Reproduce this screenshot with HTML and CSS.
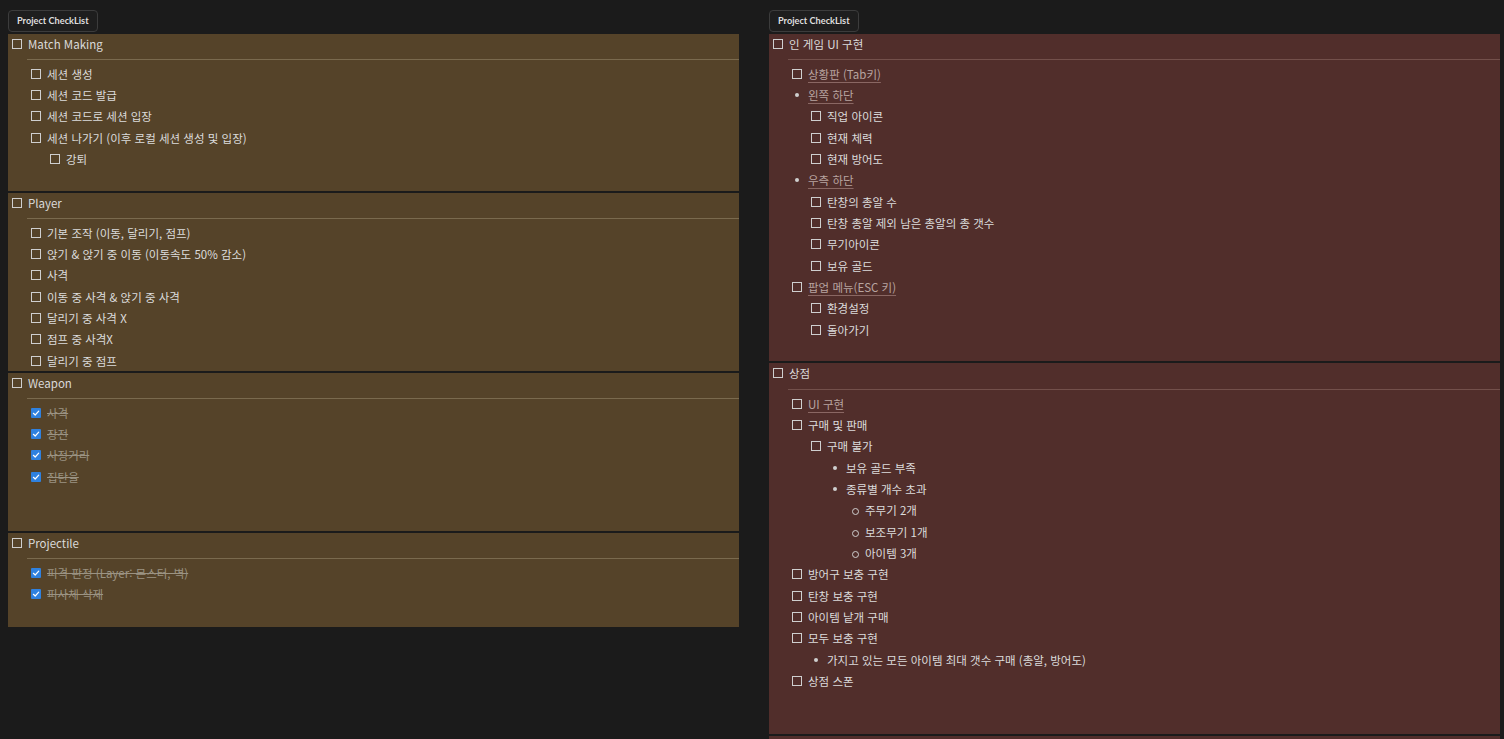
FILE: index.html
```html
<!DOCTYPE html>
<html lang="ko">
<head>
<meta charset="utf-8">
<title>Project CheckList</title>
<link rel="stylesheet" href="styles.css">
</head>
<body>
<div class="board">
  <div class="column">
    <div class="tab">Project CheckList</div>
    <div class="stack">
      <section class="node node--brown node--mm">
        <div class="node-title"><span class="box"></span><span>Match Making</span></div>
        <div class="rule"></div>
        <ul class="list">
          <li><div class="row"><span class="box"></span><span>세션 생성</span></div></li>
          <li><div class="row"><span class="box"></span><span>세션 코드 발급</span></div></li>
          <li><div class="row"><span class="box"></span><span>세션 코드로 세션 입장</span></div></li>
          <li><div class="row"><span class="box"></span><span>세션 나가기 (이후 로컬 세션 생성 및 입장)</span></div>
            <ul class="list">
              <li><div class="row"><span class="box"></span><span>강퇴</span></div></li>
            </ul>
          </li>
        </ul>
      </section>
      <section class="node node--brown node--player">
        <div class="node-title"><span class="box"></span><span>Player</span></div>
        <div class="rule"></div>
        <ul class="list">
          <li><div class="row"><span class="box"></span><span>기본 조작 (이동, 달리기, 점프)</span></div></li>
          <li><div class="row"><span class="box"></span><span>앉기 &amp; 앉기 중 이동 (이동속도 50% 감소)</span></div></li>
          <li><div class="row"><span class="box"></span><span>사격</span></div></li>
          <li><div class="row"><span class="box"></span><span>이동 중 사격 &amp; 앉기 중 사격</span></div></li>
          <li><div class="row"><span class="box"></span><span>달리기 중 사격 X</span></div></li>
          <li><div class="row"><span class="box"></span><span>점프 중 사격X</span></div></li>
          <li><div class="row"><span class="box"></span><span>달리기 중 점프</span></div></li>
        </ul>
      </section>
      <section class="node node--brown node--weapon">
        <div class="node-title"><span class="box"></span><span>Weapon</span></div>
        <div class="rule"></div>
        <ul class="list">
          <li><div class="row row--done"><svg class="check" viewBox="0 0 10 10"><rect width="10" height="10" rx="1"/><path d="M2.4 5.3 L4.2 7 L7.7 3.2"/></svg><span>사격</span></div></li>
          <li><div class="row row--done"><svg class="check" viewBox="0 0 10 10"><rect width="10" height="10" rx="1"/><path d="M2.4 5.3 L4.2 7 L7.7 3.2"/></svg><span>장전</span></div></li>
          <li><div class="row row--done"><svg class="check" viewBox="0 0 10 10"><rect width="10" height="10" rx="1"/><path d="M2.4 5.3 L4.2 7 L7.7 3.2"/></svg><span>사정거리</span></div></li>
          <li><div class="row row--done"><svg class="check" viewBox="0 0 10 10"><rect width="10" height="10" rx="1"/><path d="M2.4 5.3 L4.2 7 L7.7 3.2"/></svg><span>집탄율</span></div></li>
        </ul>
      </section>
      <section class="node node--brown node--proj">
        <div class="node-title"><span class="box"></span><span>Projectile</span></div>
        <div class="rule"></div>
        <ul class="list">
          <li><div class="row row--done"><svg class="check" viewBox="0 0 10 10"><rect width="10" height="10" rx="1"/><path d="M2.4 5.3 L4.2 7 L7.7 3.2"/></svg><span>피격 판정 (Layer: 몬스터, 벽)</span></div></li>
          <li><div class="row row--done"><svg class="check" viewBox="0 0 10 10"><rect width="10" height="10" rx="1"/><path d="M2.4 5.3 L4.2 7 L7.7 3.2"/></svg><span>피사체 삭제</span></div></li>
        </ul>
      </section>
    </div>
  </div>

  <div class="column">
    <div class="tab">Project CheckList</div>
    <div class="stack">
      <section class="node node--red node--ingame">
        <div class="node-title"><span class="box"></span><span>인 게임 UI 구현</span></div>
        <div class="rule"></div>
        <ul class="list">
          <li><div class="row"><span class="box"></span><span class="link">상황판 (Tab키)</span></div></li>
          <li><div class="row"><span class="dot"></span><span class="link">왼쪽 하단</span></div>
            <ul class="list">
              <li><div class="row"><span class="box"></span><span>직업 아이콘</span></div></li>
              <li><div class="row"><span class="box"></span><span>현재 체력</span></div></li>
              <li><div class="row"><span class="box"></span><span>현재 방어도</span></div></li>
            </ul>
          </li>
          <li><div class="row"><span class="dot"></span><span class="link">우측 하단</span></div>
            <ul class="list">
              <li><div class="row"><span class="box"></span><span>탄창의 총알 수</span></div></li>
              <li><div class="row"><span class="box"></span><span>탄창 총알 제외 남은 총알의 총 갯수</span></div></li>
              <li><div class="row"><span class="box"></span><span>무기아이콘</span></div></li>
              <li><div class="row"><span class="box"></span><span>보유 골드</span></div></li>
            </ul>
          </li>
          <li><div class="row"><span class="box"></span><span class="link">팝업 메뉴(ESC 키)</span></div>
            <ul class="list">
              <li><div class="row"><span class="box"></span><span>환경설정</span></div></li>
              <li><div class="row"><span class="box"></span><span>돌아가기</span></div></li>
            </ul>
          </li>
        </ul>
      </section>
      <section class="node node--red node--shop">
        <div class="node-title"><span class="box"></span><span>상점</span></div>
        <div class="rule rule--shop"></div>
        <ul class="list">
          <li><div class="row"><span class="box"></span><span class="link">UI 구현</span></div></li>
          <li><div class="row"><span class="box"></span><span>구매 및 판매</span></div>
            <ul class="list">
              <li><div class="row"><span class="box"></span><span>구매 불가</span></div>
                <ul class="list">
                  <li><div class="row"><span class="dot"></span><span>보유 골드 부족</span></div></li>
                  <li><div class="row"><span class="dot"></span><span>종류별 개수 초과</span></div>
                    <ul class="list">
                      <li><div class="row"><span class="dot dot--hollow"></span><span>주무기 2개</span></div></li>
                      <li><div class="row"><span class="dot dot--hollow"></span><span>보조무기 1개</span></div></li>
                      <li><div class="row"><span class="dot dot--hollow"></span><span>아이템 3개</span></div></li>
                    </ul>
                  </li>
                </ul>
              </li>
            </ul>
          </li>
          <li><div class="row"><span class="box"></span><span>방어구 보충 구현</span></div></li>
          <li><div class="row"><span class="box"></span><span>탄창 보충 구현</span></div></li>
          <li><div class="row"><span class="box"></span><span>아이템 낱개 구매</span></div></li>
          <li><div class="row"><span class="box"></span><span>모두 보충 구현</span></div>
            <ul class="list">
              <li><div class="row"><span class="dot"></span><span>가지고 있는 모든 아이템 최대 갯수 구매 (총알, 방어도)</span></div></li>
            </ul>
          </li>
          <li><div class="row"><span class="box"></span><span>상점 스폰</span></div></li>
        </ul>
      </section>
      <section class="node node--red node--next"></section>
    </div>
  </div>
</div>
</body>
</html>
```

FILE: styles.css
```css
* { box-sizing: border-box; }

html, body {
  margin: 0;
  padding: 0;
  height: 100%;
  overflow: hidden;
  background: #1b1b1b;
}

body {
  font-family: "Noto Sans CJK KR", "Noto Sans", sans-serif;
  font-size: 11.5px;
  color: #dcdcdc;
}

.board {
  display: flex;
  gap: 30px;
  padding: 10px 0 0 8px;
}

.column {
  width: 731px;
  display: flex;
  flex-direction: column;
  align-items: flex-start;
}

.tab {
  height: 22px;
  padding: 0 8px;
  border: 1px solid #3c3c3c;
  border-radius: 4px;
  background: #1e1e1e;
  font-family: "Lato", "Noto Sans", sans-serif;
  font-size: 9.2px;
  font-weight: 700;
  line-height: 20px;
  color: #dedede;
  margin-bottom: 2px;
}

.stack {
  width: 100%;
  display: flex;
  flex-direction: column;
  gap: 2px;
}

.node {
  width: 100%;
  overflow: hidden;
}

.node--brown { background: #554329; }
.node--red { background: #512e2b; }

.node--mm { height: 157px; }
.node--player { height: 178px; }
.node--weapon { height: 158px; }
.node--proj { height: 94px; }
.node--ingame { height: 327px; }
.node--shop { height: 371px; }
.node--next { height: 3px; }

.node-title {
  display: flex;
  align-items: center;
  gap: 6px;
  height: 19px;
  padding-left: 4px;
  color: #dadada;
}

.rule {
  height: 1px;
  margin: 6px 0 0 19px;
}
.node--brown .rule { background: #7a6a4e; }
.node--red .rule { background: #73504b; }
.rule--shop { margin-top: 7px; }

.list {
  list-style: none;
  margin: 0;
  padding: 0 0 0 19px;
}

.node > .list {
  padding-left: 23px;
  margin-top: 3px;
}

.row {
  display: flex;
  align-items: center;
  gap: 6px;
  height: 21.33px;
  white-space: nowrap;
}

.box {
  flex: none;
  width: 10px;
  height: 10px;
  border: 1px solid #cfcfcf;
}

.check {
  flex: none;
  width: 10px;
  height: 10px;
}
.check rect { fill: #2f81df; }
.check path {
  fill: none;
  stroke: #ffffff;
  stroke-width: 1.2;
  stroke-linecap: round;
  stroke-linejoin: round;
}

.row--done span {
  color: #9b9383;
  text-decoration: line-through;
  text-decoration-color: #9b9383;
}

.dot {
  flex: none;
  width: 10px;
  height: 10px;
  position: relative;
}
.dot::after {
  content: "";
  position: absolute;
  left: 3px;
  top: 3px;
  width: 4px;
  height: 4px;
  border-radius: 50%;
  background: #cfcfcf;
}
.dot--hollow::after {
  background: transparent;
  border: 1px solid #cfcfcf;
  width: 5px;
  height: 5px;
}

.link {
  color: #b8a4a0;
  text-decoration: underline;
  text-decoration-color: #8a6763;
  text-underline-offset: 3px;
}
```
